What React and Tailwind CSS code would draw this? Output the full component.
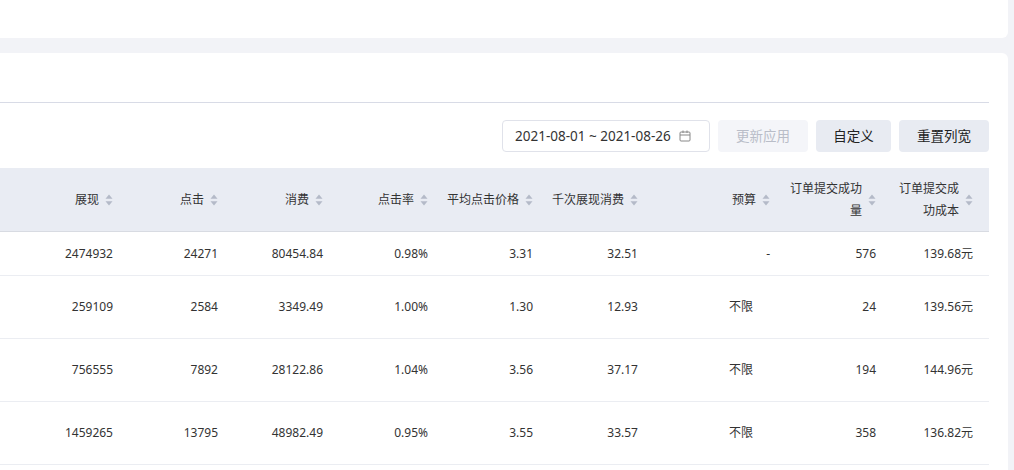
import React from "react";

const Sort = () => (
  <svg width="8" height="12" viewBox="0 0 8 12" className="ml-[6px] shrink-0">
    <path d="M4 0.5 L7.5 4.8 H0.5 Z" fill="#b4bac8" />
    <path d="M4 11.5 L7.5 7.2 H0.5 Z" fill="#b4bac8" />
  </svg>
);

const cols = [
  { w: 129, h: "展现" },
  { w: 105, h: "点击" },
  { w: 105, h: "消费" },
  { w: 105, h: "点击率" },
  { w: 105, h: "平均点击价格" },
  { w: 105, h: "千次展现消费" },
  { w: 132, h: "预算" },
  { w: 106, h: ["订单提交成功", "量"] },
  { w: 97, h: ["订单提交成", "功成本"] },
];

const rows = [
  { h: 44, v: ["2474932", "24271", "80454.84", "0.98%", "3.31", "32.51", "-", "576", "139.68元"] },
  { h: 63, v: ["259109", "2584", "3349.49", "1.00%", "1.30", "12.93", "不限", "24", "139.56元"] },
  { h: 63, v: ["756555", "7892", "28122.86", "1.04%", "3.56", "37.17", "不限", "194", "144.96元"] },
  { h: 63, v: ["1459265", "13795", "48982.49", "0.95%", "3.55", "33.57", "不限", "358", "136.82元"] },
];

export default function App() {
  return (
    <div
      className="w-[1014px] h-[470px] bg-[#f2f3f7] overflow-hidden text-[12px] text-[#333]"
      style={{ fontFamily: '"Noto Sans", "Noto Sans CJK SC", sans-serif' }}
    >
      <div className="w-[1008px] h-[38px] bg-white rounded-br-[6px]" />
      <div className="mt-[15px] w-[1008px] h-[420px] bg-white rounded-tr-[6px]">
        <div className="h-[50px] w-[989px] border-b border-[#d8dbe6]" />
        <div className="w-[989px] flex justify-end gap-2 mt-[17px] h-[32px]">
          <div className="w-[208px] h-[32px] border border-[#e0e2ea] rounded-[4px] flex items-center pl-[12px] text-[13.5px] text-[#333]">
            <span>2021-08-01 ~ 2021-08-26</span>
            <svg width="12" height="12" viewBox="0 0 12 12" className="ml-[8px]" fill="none" stroke="#888" strokeWidth="1">
              <rect x="1" y="2" width="10" height="9" rx="1" />
              <path d="M1 5 H11 M4 0.5 V3 M8 0.5 V3" />
            </svg>
          </div>
          <div className="w-[90px] h-[32px] rounded-[4px] bg-[#f4f5f9] text-[#b9bdc8] text-[13.5px] flex items-center justify-center">更新应用</div>
          <div className="w-[75px] h-[32px] rounded-[4px] bg-[#e8ebf2] text-[#222] text-[13.5px] flex items-center justify-center">自定义</div>
          <div className="w-[90px] h-[32px] rounded-[4px] bg-[#e8ebf2] text-[#222] text-[13.5px] flex items-center justify-center">重置列宽</div>
        </div>
        <div className="w-[989px] mt-[16px]">
          <div className="flex h-[64px] bg-[#e9ecf3] border-b border-[#d8dbe2]">
            {cols.map((c, i) => (
              <div key={i} style={{ width: c.w }} className="flex items-center justify-end pr-[16px] text-[#333]">
                {Array.isArray(c.h) ? (
                  <span className="text-right leading-[22px]">{c.h[0]}<br />{c.h[1]}</span>
                ) : (
                  <span>{c.h}</span>
                )}
                <Sort />
              </div>
            ))}
          </div>
          {rows.map((r, ri) => (
            <div key={ri} style={{ height: r.h }} className="flex border-b border-[#ebedf2]">
              {r.v.map((v, i) => (
                <div
                  key={i}
                  style={{ width: cols[i].w }}
                  className={`flex items-center pr-[16px] ${v === "不限" ? "justify-start pl-[75px]" : "justify-end"}`}
                >
                  {v}
                </div>
              ))}
            </div>
          ))}
        </div>
      </div>
    </div>
  );
}
